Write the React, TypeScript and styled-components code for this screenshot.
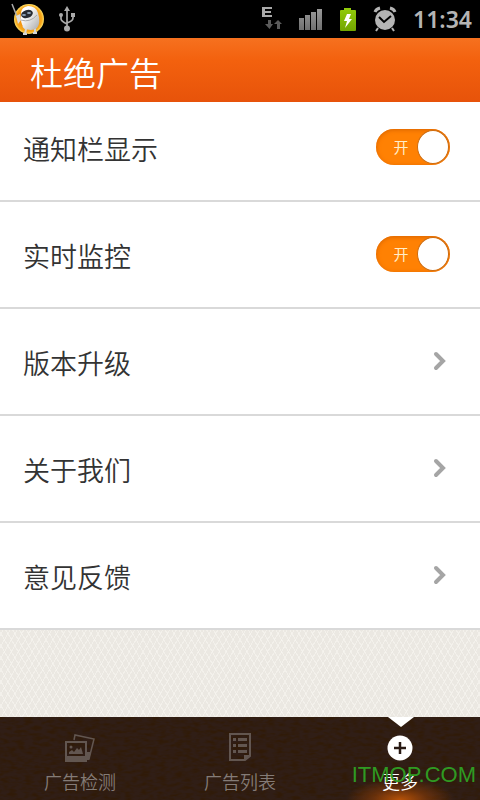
import React, { useState } from "react";
import styled, { createGlobalStyle, css } from "styled-components";

const GlobalStyle = createGlobalStyle`
  * { box-sizing: border-box; }
  body { margin: 0; background: #edeae5; }
  button { font: inherit; }
`;

const Screen = styled.div`
  min-height: 100vh;
  display: flex;
  flex-direction: column;
  font-family: "Noto Sans CJK SC", "Noto Sans", sans-serif;
  font-weight: 350;
`;

const StatusBar = styled.div`
  height: 38px;
  padding: 0 8px 0 11px;
  background: #000;
  color: #b4b4b4;
  display: flex;
  align-items: center;
  justify-content: space-between;
`;

const StatusGroup = styled.div<{ $gap: number }>`
  display: flex;
  align-items: center;
  gap: ${(p) => p.$gap}px;
`;

const Clock = styled.time`
  font-family: "Noto Sans", sans-serif;
  font-size: 23px;
  line-height: 38px;
  font-weight: 600;
`;

const Header = styled.header`
  height: 64px;
  padding: 0 30px;
  display: flex;
  align-items: center;
  background: linear-gradient(#f6711f, #f3610e 35%, #e7530a);
`;

const Title = styled.h1`
  margin: 0;
  padding-top: 4px;
  color: #fff;
  font-size: 33px;
  line-height: 40px;
  font-weight: 350;
`;

const List = styled.ul`
  margin: 0;
  padding: 0;
  list-style: none;
  background: #fff;
`;

const rowBox = css`
  width: 100%;
  padding: 34px 30px 31px 23px;
  display: flex;
  align-items: center;
  justify-content: space-between;
  color: #333;
  font-size: 27px;
  line-height: 40px;
`;

const Item = styled.li`
  border-bottom: 2px solid #d9d9d9;
  &:first-child > * { padding-top: 27px; }
`;

const SettingRow = styled.label`
  ${rowBox}
`;

const LinkRow = styled.a`
  ${rowBox}
  padding-right: 32px;
  text-decoration: none;
`;

const Switch = styled.span<{ $on: boolean }>`
  width: 74px;
  height: 36px;
  margin-bottom: 4px;
  padding: 0 1px;
  display: flex;
  align-items: center;
  justify-content: space-between;
  flex-direction: ${(p) => (p.$on ? "row" : "row-reverse")};
  border-radius: 18px;
  background: ${(p) => (p.$on ? "#ff8103" : "#aaa")};
  box-shadow: inset 0 1px 4px ${(p) => (p.$on ? "#d96400" : "#777")};
  &:focus-within { outline: 2px solid #f6711f; outline-offset: 2px; }
`;

const SwitchInput = styled.input`
  appearance: none;
  width: 0;
  height: 0;
  margin: 0;
  outline: none;
`;

const SwitchText = styled.span`
  flex: 1;
  padding-left: 8px;
  text-align: center;
  color: #ffedc9;
  font-size: 15px;
  line-height: 36px;
  font-weight: 400;
`;

const Knob = styled.span`
  width: 32px;
  height: 34px;
  border: 1px solid #cf6b0c;
  border-radius: 50%;
  background: #fff;
`;

const Backdrop = styled.main`
  flex: 1;
  background-color: #ebe8e2;
  background-image:
    repeating-linear-gradient(60deg, #f8f6f199 0 1px, transparent 1px 6px),
    repeating-linear-gradient(-60deg, #f8f6f199 0 1px, transparent 1px 6px);
`;

const TabBar = styled.nav`
  position: relative;
  display: grid;
  grid-template-columns: repeat(3, 1fr);
  background: #301e16;
`;

const Leather = styled.svg`
  position: absolute;
  inset: 0;
  width: 100%;
  height: 100%;
`;

const Tab = styled.button<{ $active?: boolean }>`
  position: relative;
  height: 83px;
  padding: 14px 0 0;
  border: 0;
  display: flex;
  flex-direction: column;
  align-items: center;
  gap: 5px;
  color: ${(p) => (p.$active ? "#fff" : "#847b77")};
  background: ${(p) =>
    p.$active
      ? "radial-gradient(ellipse 54px 22px at 50% 100%, #b75208, #8c3d0899 50%, transparent)"
      : "transparent"};
  font-size: 18px;
  line-height: 26px;
`;

const Pointer = styled.svg`
  position: absolute;
  top: 0;
  left: calc(50% - 12px);
`;

const Watermark = styled.span`
  position: absolute;
  right: 4px;
  bottom: 13px;
  color: #2f9a22;
  font-family: "Liberation Sans", sans-serif;
  font-size: 22px;
  line-height: 24px;
  font-weight: 400;
  pointer-events: none;
`;

const RobotIcon = () => (
  <svg width="36" height="38" viewBox="0 0 36 38" aria-hidden="true">
    <defs>
      <radialGradient id="sun"><stop offset="0.5" stopColor="#f08b0b" /><stop offset="0.85" stopColor="#f7a91c" /><stop offset="1" stopColor="#ffdf68" /></radialGradient>
      <linearGradient id="shell" x2="1" y2="1"><stop offset="0.3" stopColor="#fff" /><stop offset="1" stopColor="#a9a9a9" /></linearGradient>
    </defs>
    <circle cx="18" cy="19" r="15" fill="url(#sun)" />
    <path d="M1 4L7 19" stroke="#aaa" strokeWidth="1.500" />
    <path d="M5 16L9 14L10 20L7 24Z" fill="#ddd" />
    <path d="M12 26L15 29L14 34M24 28L24 33M12 34H16M22 33H26" fill="none" stroke="#d5d5d5" strokeWidth="2" />
    <path d="M10 14Q10 7 17 6Q25 6 27 13Q30 23 26 28Q20 32 13 28Q9 23 10 14Z" fill="url(#shell)" />
    <path d="M10 20Q19 23 26 15" fill="none" stroke="#aaa" strokeWidth="1" />
    <ellipse cx="16" cy="14" rx="6" ry="4" transform="rotate(-16 16 14)" fill="#272b32" />
    <ellipse cx="13" cy="15" rx="2" ry="1" fill="#91a4b8" />
    <ellipse cx="18" cy="13" rx="2" ry="1" fill="#91a4b8" />
  </svg>
);

const UsbIcon = () => (
  <svg width="18" height="26" viewBox="0 0 18 26" fill="none" stroke="#aaa" strokeWidth="1.700" aria-hidden="true">
    <path d="M8 23V4M2 10V13Q2 15 8 18M14 9V12Q14 15 8 17" />
    <path d="M8 0L11 5H5Z" fill="#aaa" stroke="none" />
    <circle cx="2" cy="9" r="2" fill="#aaa" stroke="none" />
    <path d="M12 7H16V11H12Z" fill="#aaa" stroke="none" />
    <circle cx="8" cy="22.500" r="3" fill="#aaa" stroke="none" />
  </svg>
);

const DataIcon = () => (
  <svg width="21" height="24" viewBox="0 0 21 24" aria-hidden="true">
    <path d="M0 0H10V2H3V4H9V6H3V8H10V10H0Z" fill="#a9a9a9" />
    <path d="M6 13H9V17H11L7.500 22L3 17H6ZM15 22H18V17H20L16 13L12 17H15Z" fill="#5b5b5b" />
  </svg>
);

const SignalIcon = () => (
  <svg width="24" height="22" viewBox="0 0 24 22" aria-hidden="true">
    <defs><linearGradient id="bars" x2="0" y2="1"><stop stopColor="#999" /><stop offset="1" stopColor="#707070" /></linearGradient></defs>
    <path d="M0 10H5V22H0ZM6 7H11V22H6ZM12 4H17V22H12ZM18 1H23V22H18Z" fill="url(#bars)" />
  </svg>
);

const BatteryIcon = () => (
  <svg width="18" height="25" viewBox="0 0 18 25" aria-hidden="true">
    <defs><linearGradient id="charge" x2="0" y2="1"><stop stopColor="#92cc0b" /><stop offset="1" stopColor="#72a500" /></linearGradient></defs>
    <path d="M5 1H12V3H16Q17 3 17 4V23Q17 24 16 24H2Q1 24 1 23V4Q1 3 2 3H5Z" fill="url(#charge)" />
    <path d="M8 7H12L10 12H13L6 21L8 14H5Z" fill="#fff" />
  </svg>
);

const AlarmIcon = () => (
  <svg width="24" height="26" viewBox="0 0 24 26" aria-hidden="true">
    <g fill="none" stroke="#b4b4b4" strokeWidth="3"><path d="M2 6Q3 3 7 2M17 2Q21 3 22 6" /><path d="M5 22L3 25M19 22L21 25" strokeWidth="2" /></g>
    <circle cx="12" cy="14" r="10" fill="#b4b4b4" />
    <path d="M6 11L11 16L18 10" fill="none" stroke="#000" strokeWidth="2" />
  </svg>
);

const Chevron = () => (
  <svg width="16" height="24" viewBox="0 0 16 24" aria-hidden="true">
    <path d="M4 3L11 10L4 17" fill="none" stroke="#a5a5a5" strokeWidth="4" strokeLinecap="round" />
  </svg>
);

const PhotosIcon = () => (
  <svg width="32" height="32" viewBox="0 0 32 32" aria-hidden="true">
    <path d="M10 9L11 4L30 8L25 28H22" fill="none" stroke="#625650" strokeWidth="1.500" />
    <path d="M23 21H27L25 29H22Z" fill="#625650" />
    <path fillRule="evenodd" d="M1 10H23V31H1ZM3 12V25H21V12Z" fill="#625650" />
    <path d="M5 23V21L8 19L10 21L13 17L15 19L17 16L19 23Z" fill="#625650" />
    <circle cx="7" cy="16" r="1.500" fill="#625650" />
  </svg>
);

const ListIcon = () => (
  <svg width="24" height="32" viewBox="0 0 24 32" aria-hidden="true">
    <path d="M2 3H22V25L17 29H2Z" fill="none" stroke="#625650" strokeWidth="2" />
    <path d="M5 7H8V10H5ZM10 7H19V10H10ZM5 13H8V16H5ZM10 13H19V16H10ZM5 19H8V22H5ZM10 19H19V22H10ZM16 24H22L16 30Z" fill="#625650" />
  </svg>
);

const MoreIcon = () => (
  <svg width="26" height="32" viewBox="0 0 26 32" aria-hidden="true">
    <circle cx="13" cy="17" r="12.500" fill="#fff" />
    <path d="M13 11V23M7 17H19" stroke="#281913" strokeWidth="2.500" />
  </svg>
);

const ToggleItem = ({ label }: { label: string }) => {
  const [on, setOn] = useState(true);
  return (
    <Item>
      <SettingRow>
        {label}
        <Switch $on={on}>
          <SwitchInput type="checkbox" role="switch" checked={on} onChange={() => setOn(!on)} />
          <SwitchText>{on ? "开" : "关"}</SwitchText>
          <Knob />
        </Switch>
      </SettingRow>
    </Item>
  );
};

export default function App() {
  return (
    <Screen>
      <GlobalStyle />
      <StatusBar>
        <StatusGroup $gap={12}><RobotIcon /><UsbIcon /></StatusGroup>
        <StatusGroup $gap={16}>
          <DataIcon /><SignalIcon /><BatteryIcon /><AlarmIcon /><Clock>11:34</Clock>
        </StatusGroup>
      </StatusBar>
      <Header><Title>杜绝广告</Title></Header>
      <Backdrop>
        <List>
          <ToggleItem label="通知栏显示" />
          <ToggleItem label="实时监控" />
          {["版本升级", "关于我们", "意见反馈"].map((label) => (
            <Item key={label}><LinkRow href="#">{label}<Chevron /></LinkRow></Item>
          ))}
        </List>
      </Backdrop>
      <TabBar>
        <Leather aria-hidden="true">
          <filter id="grain" x="0" y="0" width="100%" height="100%">
            <feTurbulence type="fractalNoise" baseFrequency="0.12 0.3" numOctaves="2" seed="4" />
            <feColorMatrix values="0 0 0 0 0.03  0 0 0 0 0.01  0 0 0 0 0  3 0 0 0 -1.200" />
          </filter>
          <rect width="100%" height="100%" filter="url(#grain)" opacity="0.6" />
        </Leather>
        <Tab><PhotosIcon />广告检测</Tab>
        <Tab><ListIcon />广告列表</Tab>
        <Tab $active aria-current="page">
          <Pointer width="26" height="10" viewBox="0 0 26 10" aria-hidden="true"><path d="M0 0H26L13 10Z" fill="#fff" /></Pointer>
          <MoreIcon />更多
        </Tab>
        <Watermark>ITMOP.COM</Watermark>
      </TabBar>
    </Screen>
  );
}
